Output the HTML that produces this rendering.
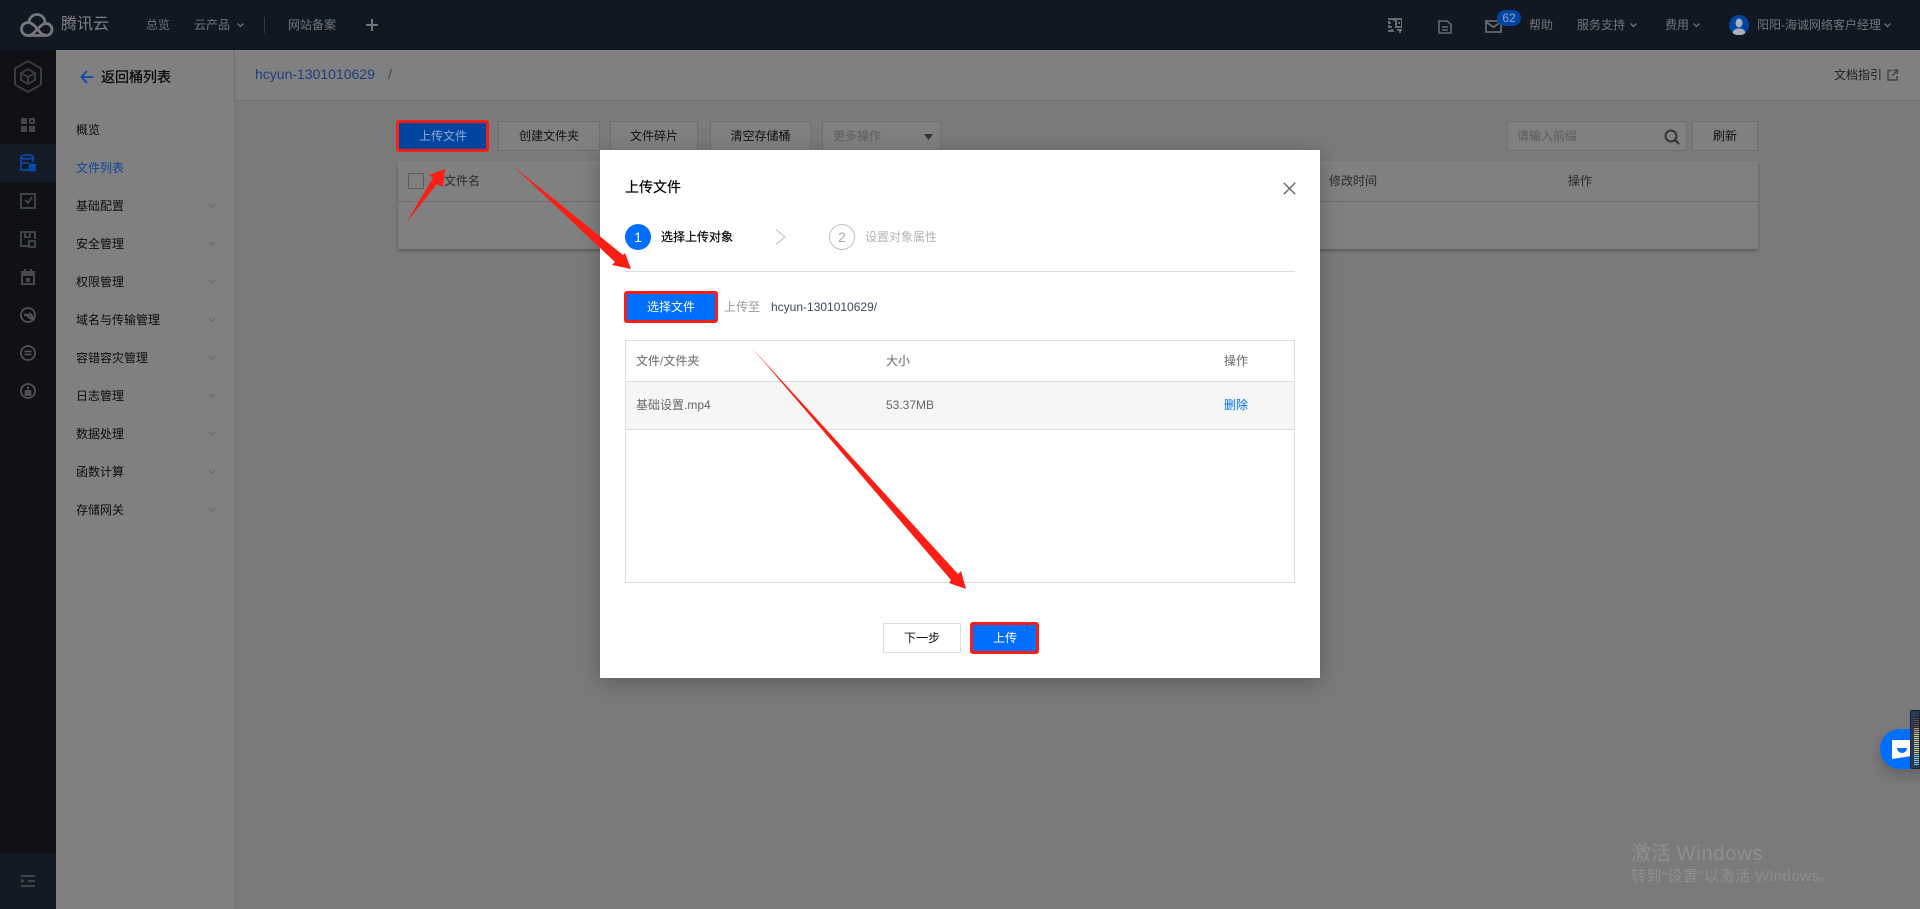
<!DOCTYPE html>
<html lang="zh-CN"><head><meta charset="utf-8"><title>上传文件</title>
<style>
html,body{margin:0;padding:0;width:1920px;height:909px;overflow:hidden;background:#7a7a7a;font-family:"Liberation Sans","Noto Sans CJK SC",sans-serif;font-size:12px}
div,span,svg{position:absolute;box-sizing:border-box}
.t{white-space:nowrap;line-height:20px;height:20px}
.b{border:1px solid #6f6f6f;background:#808080;text-align:center;line-height:28px;color:#111;white-space:nowrap}
.n{color:#72757a}.m{color:#0c0c0c;left:76px}
</style></head><body>
<!-- top bar -->
<div style="left:0;top:0;width:1920px;height:50px;background:#121822"></div>
<svg style="left:20px;top:13px" width="34" height="24" viewBox="0 0 34 24" fill="none" stroke="#74777b" stroke-width="2.800"><path d="M8 22.500h18a6 6 0 1 0 0-12c-3.500 0-6 3-8.500 5.500s-5 6.500-9.500 6.500a6.500 6.500 0 1 1 0-13c3.500 0 6 2.500 9 6s4.500 6.500 8.500 6.500"/><path d="M9 9.500A8 8 0 0 1 25 9.500"/></svg>
<span class="t" style="left:61px;top:15px;font-size:16px;color:#7e8185">腾讯云</span>
<span class="t n" style="left:146px;top:15px">总览</span>
<span class="t n" style="left:194px;top:15px">云产品</span>
<svg style="left:237px;top:23px" width="7" height="5" fill="none" stroke="#72757a" stroke-width="1.300"><path d="M.5 .5l3 3 3-3"/></svg>
<div style="left:264px;top:17px;width:1px;height:16px;background:#333840"></div>
<span class="t n" style="left:288px;top:15px">网站备案</span>
<svg style="left:366px;top:19px" width="12" height="12" fill="none" stroke="#72757a" stroke-width="2"><path d="M6 0v12M0 6h12"/></svg>
<svg style="left:1388px;top:18px" width="14" height="15" fill="none" stroke="#66696e" stroke-width="2"><path d="M0 1h5M6 0v3M0 5h3M0 9h4M0 13h6M8 1h6v8H8zM11 4v2M9 12h5M12 11v4M1 3v1M1 7v1M4 11v3"/></svg>
<svg style="left:1438px;top:20px" width="14" height="14" fill="none" stroke="#66696e" stroke-width="1.600"><path d="M1 1h8l4 3.500V13H1zM4 7h6M4 10h6"/></svg>
<svg style="left:1485px;top:20px" width="17" height="13" fill="none" stroke="#66696e" stroke-width="1.800"><path d="M1 1h15v11H1zM1 2l7.500 5L16 2"/></svg>
<div style="left:1497px;top:10px;width:24px;height:16px;border-radius:8px;background:#0045a0;color:#8fa5cc;text-align:center;line-height:16px;font-size:12px">62</div>
<span class="t n" style="left:1529px;top:15px">帮助</span>
<span class="t n" style="left:1577px;top:15px">服务支持</span>
<svg style="left:1630px;top:23px" width="7" height="5" fill="none" stroke="#72757a" stroke-width="1.300"><path d="M.5 .5l3 3 3-3"/></svg>
<span class="t n" style="left:1665px;top:15px">费用</span>
<svg style="left:1693px;top:23px" width="7" height="5" fill="none" stroke="#72757a" stroke-width="1.300"><path d="M.5 .5l3 3 3-3"/></svg>
<svg style="left:1729px;top:15px" width="20" height="20"><circle cx="10" cy="10" r="10" fill="#0045a0"/><ellipse cx="10" cy="8" rx="3.500" ry="4.500" fill="#a9b1bc"/><path d="M3.500 18c1-4 4-4.500 6.500-4.500s5.500.5 6.500 4.500a10 10 0 0 1-13 0z" fill="#a9b1bc"/></svg>
<span class="t n" style="left:1757px;top:15px">阳阳-海诚网络客户经理</span>
<svg style="left:1884px;top:23px" width="7" height="5" fill="none" stroke="#72757a" stroke-width="1.300"><path d="M.5 .5l3 3 3-3"/></svg>
<!-- left rail -->
<div style="left:0;top:50px;width:56px;height:859px;background:#0f1116"></div>
<div style="left:0;top:144px;width:56px;height:38px;background:#141b27"></div>
<div style="left:0;top:853px;width:56px;height:56px;background:#131a24"></div>
<svg style="left:14px;top:60px" width="28" height="33" fill="none" stroke="#3e4044" stroke-width="1.800"><path d="M14 1l13 7.500v16L14 32 1 24.500v-16z"/><path d="M14 9l7 4v7l-7 4-7-4v-7zM7 13l7 4 7-4M14 17v7"/></svg>
<svg style="left:21px;top:118px" width="14" height="14" fill="#434548"><path d="M0 0h6v6H0zM0 8h6v6H0zM8 8h6v6H8z"/><path fill-rule="evenodd" d="M8 0h6v6H8zM10 2v2h2V2z"/></svg>
<svg style="left:20px;top:154px" width="16" height="18" fill="none" stroke="#0a48a5" stroke-width="1.800"><path d="M9 16H1V3c0-3 12-3 12 0v5M1 3c0 2.500 12 2.500 12 0M1 9h8"/><path d="M9.500 10.500h5.500v6H9.500z" fill="#0a48a5"/></svg>
<svg style="left:20px;top:193px" width="16" height="16" fill="none" stroke="#46484c" stroke-width="1.800"><path d="M1 1h14v14H1zM5 7l3 3 4-6"/></svg>
<svg style="left:20px;top:231px" width="16" height="17" fill="none" stroke="#46484c" stroke-width="1.800"><path d="M9 15H1V1h14v7M5 2v4h5V2M9 10h6v6H9z"/></svg>
<svg style="left:21px;top:269px" width="14" height="16" fill="none" stroke="#46484c" stroke-width="2"><path d="M1 4h12v11H1zM4 0v3M10 0v3"/><path d="M1 3h12v3H1z" fill="#46484c"/><path d="M6 10h2v2H6z" fill="#46484c"/></svg>
<svg style="left:20px;top:307px" width="16" height="16" fill="none" stroke="#505256" stroke-width="1.800"><circle cx="8" cy="8" r="7"/><path d="M4 8h3l3 3 3 1-1-3-3-3" stroke-width="2.400"/></svg>
<svg style="left:20px;top:345px" width="16" height="16" fill="none" stroke="#505256" stroke-width="1.800"><circle cx="8" cy="8" r="7"/><path d="M4.500 6.500h7M4.500 9.500h7"/></svg>
<svg style="left:20px;top:383px" width="16" height="16" fill="none" stroke="#505256" stroke-width="1.800"><circle cx="8" cy="8" r="7"/><path d="M8 3.500v3M5.500 8h5v4h-5z" fill="#505256"/></svg>
<svg style="left:21px;top:875px" width="14" height="12" fill="#3f4449"><path d="M0 0h14v2H0zM7 5h7v2H7zM0 10h14v2H0zM0 3.500L4 6 0 8.500z"/></svg>
<!-- secondary nav -->
<div style="left:56px;top:50px;width:179px;height:859px;background:#808080;border-right:1px solid #6f6f6f"></div>
<svg style="left:80px;top:70px" width="14" height="14" fill="none" stroke="#0a48a5" stroke-width="1.800"><path d="M13.500 7H1.500M7 1L1.500 7 7 13"/></svg>
<span class="t" style="left:101px;top:67px;font-size:14px;color:#050505;-webkit-text-stroke:.2px #050505">返回桶列表</span>
<span class="t m" style="top:120px">概览</span>
<span class="t m" style="top:158px;color:#0d47a1">文件列表</span>
<span class="t m" style="top:196px">基础配置</span>
<span class="t m" style="top:234px">安全管理</span>
<span class="t m" style="top:272px">权限管理</span>
<span class="t m" style="top:310px">域名与传输管理</span>
<span class="t m" style="top:348px">容错容灾管理</span>
<span class="t m" style="top:386px">日志管理</span>
<span class="t m" style="top:424px">数据处理</span>
<span class="t m" style="top:462px">函数计算</span>
<span class="t m" style="top:500px">存储网关</span>
<svg style="left:0;top:0" width="235" height="540" fill="none" stroke="#6c6c6c" stroke-width="1.200"><path d="M209 204l3 3 3-3M209 242l3 3 3-3M209 280l3 3 3-3M209 318l3 3 3-3M209 356l3 3 3-3M209 394l3 3 3-3M209 432l3 3 3-3M209 470l3 3 3-3M209 508l3 3 3-3"/></svg>
<!-- breadcrumb -->
<div style="left:235px;top:50px;width:1685px;height:51px;background:#808080;border-bottom:1px solid #6f6f6f"></div>
<span class="t" style="left:255px;top:64px;font-size:14px;color:#1f3e80">hcyun-1301010629</span>
<span class="t" style="left:388px;top:64px;font-size:14px;color:#444">/</span>
<span class="t" style="left:1834px;top:65px;color:#222">文档指引</span>
<svg style="left:1887px;top:69px" width="11" height="12" fill="none" stroke="#444" stroke-width="1.500"><path d="M5 1.500H1v9.500h9V7M5.500 6.500L10 1.500M6.500 1h4v4"/></svg>
<!-- toolbar -->
<div style="left:399px;top:123px;width:88px;height:26px;background:#0045a0;color:#94a7ca;text-align:center;line-height:26px">上传文件</div>
<div class="b" style="left:498px;top:121px;width:102px;height:30px">创建文件夹</div>
<div class="b" style="left:610px;top:121px;width:88px;height:30px">文件碎片</div>
<div class="b" style="left:710px;top:121px;width:101px;height:30px">清空存储桶</div>
<div class="b" style="left:822px;top:121px;width:119px;height:30px;text-align:left;padding-left:10px;color:#5f5f5f">更多操作</div>
<svg style="left:924px;top:134px" width="9" height="6"><path d="M0 0h9L4.500 6z" fill="#333"/></svg>
<div class="b" style="left:1507px;top:121px;width:180px;height:30px;text-align:left;padding-left:9px;color:#5c5c5c">请输入前缀</div>
<svg style="left:1664px;top:129px" width="16" height="16" fill="none" stroke="#333" stroke-width="2"><circle cx="7" cy="7" r="5.500"/><path d="M11 11l4 4"/></svg>
<div class="b" style="left:1692px;top:121px;width:66px;height:30px">刷新</div>
<!-- table -->
<div style="left:398px;top:161px;width:1360px;height:88px;background:#808080;box-shadow:0 2px 3px rgba(0,0,0,.25)"></div>
<div style="left:398px;top:201px;width:1360px;height:1px;background:#6e6e6e"></div>
<div style="left:408px;top:173px;width:16px;height:16px;border:1px solid #5c5c5c"></div>
<span class="t" style="left:444px;top:171px;color:#3a3a3a;font-weight:500">文件名</span>
<span class="t" style="left:1329px;top:171px;color:#3a3a3a;font-weight:500">修改时间</span>
<span class="t" style="left:1568px;top:171px;color:#3a3a3a;font-weight:500">操作</span>
<!-- chat float -->
<div style="left:1880px;top:729px;width:60px;height:40px;border-radius:20px;background:#006eff;box-shadow:0 6px 12px rgba(0,0,0,.2)"></div>
<svg style="left:1892px;top:740px" width="20" height="19"><path d="M0 0h20v16L0 19z" fill="#fff"/><path d="M5 8h10a5 5 0 0 1-10 0z" fill="#006eff"/></svg>
<div style="left:1910px;top:710px;width:10px;height:59px;background:#28385a;border:1px solid #1c2434;border-radius:2px 0 0 2px"></div>
<div style="left:1914px;top:717px;width:5px;height:11px;background:repeating-linear-gradient(#222 0 1px,#555 1px 2px)"></div>
<div style="left:1914px;top:728px;width:5px;height:6px;background:repeating-linear-gradient(#c29a5f 0 1px,#38466a 1px 2px)"></div>
<div style="left:1914px;top:734px;width:5px;height:20px;background:repeating-linear-gradient(#cfc978 0 1px,#38466a 1px 2px)"></div>
<div style="left:1914px;top:754px;width:5px;height:11px;background:repeating-linear-gradient(#6fd0c8 0 1px,#38466a 1px 2px)"></div>
<!-- watermark -->
<span class="t" style="left:1631px;top:842px;height:24px;line-height:24px;font-size:20px;color:#8f8f8f">激活 <span style="position:static;letter-spacing:.8px">Windows</span></span>
<span class="t" style="left:1631px;top:867px;font-size:15px;letter-spacing:.5px;color:#8f8f8f">转到“设置”以激活 Windows。</span>
<!-- modal -->
<div style="left:600px;top:150px;width:720px;height:528px;background:#fff;box-shadow:0 4px 20px rgba(0,0,0,.25)"></div>
<span class="t" style="left:625px;top:177px;font-size:14px;color:#000;-webkit-text-stroke:.2px #000">上传文件</span>
<svg style="left:1283px;top:182px" width="13" height="13" fill="none" stroke="#777" stroke-width="1.600"><path d="M.8 .8l11.400 11.400M12.200 .8L.8 12.200"/></svg>
<div style="left:625px;top:224px;width:26px;height:26px;border-radius:50%;background:#006eff;color:#fff;text-align:center;line-height:26px;font-size:14px">1</div>
<span class="t" style="left:661px;top:227px;color:#000;-webkit-text-stroke:.2px #000">选择上传对象</span>
<svg style="left:775px;top:229px" width="11" height="16" fill="none" stroke="#c9c9c9" stroke-width="1.200"><path d="M1 .5l9 7.500-9 7.500"/></svg>
<div style="left:829px;top:224px;width:26px;height:26px;border-radius:50%;border:1px solid #c0c0c0;color:#aaa;text-align:center;line-height:24px;font-size:14px">2</div>
<span class="t" style="left:865px;top:227px;color:#b4b4b4">设置对象属性</span>
<div style="left:625px;top:271px;width:670px;height:1px;background:#ddd"></div>
<div style="left:627px;top:294px;width:88px;height:26px;background:#006eff;color:#fff;text-align:center;line-height:26px">选择文件</div>
<span class="t" style="left:724px;top:297px;color:#999">上传至</span>
<span class="t" style="left:771px;top:297px;color:#3a4a63">hcyun-1301010629/</span>
<div style="left:625px;top:340px;width:670px;height:243px;border:1px solid #ddd"></div>
<div style="left:626px;top:381px;width:668px;height:49px;background:#f6f6f6;border-top:1px solid #ddd;border-bottom:1px solid #ddd"></div>
<span class="t" style="left:636px;top:351px;color:#808080;font-weight:500">文件/文件夹</span>
<span class="t" style="left:886px;top:351px;color:#808080;font-weight:500">大小</span>
<span class="t" style="left:1224px;top:351px;color:#808080;font-weight:500">操作</span>
<span class="t" style="left:636px;top:395px;color:#666">基础设置.mp4</span>
<span class="t" style="left:886px;top:395px;color:#666">53.37MB</span>
<span class="t" style="left:1224px;top:395px;color:#006eff">删除</span>
<div style="left:883px;top:623px;width:78px;height:30px;border:1px solid #ddd;background:#fff;color:#111;text-align:center;line-height:28px">下一步</div>
<div style="left:972px;top:624px;width:66px;height:28px;background:#006eff;color:#fff;text-align:center;line-height:28px">上传</div>
<!-- annotations -->
<div style="left:396px;top:120px;width:93px;height:32px;border:3px solid #fa1e14;border-radius:3px"></div>
<div style="left:624px;top:291px;width:94px;height:32px;border:3px solid #fa1e14;border-radius:3px"></div>
<div style="left:970px;top:622px;width:69px;height:32px;border:3px solid #fa1e14;border-radius:3px"></div>
<svg style="left:0;top:0" width="1920" height="909"><g fill="#fa1e14"><path d="M406 223L433 178 429 175 445 169 443 187 437 184z"/><path d="M513 166L623 255 625 253 631 269 612 265 615 262z"/><path d="M752 348L958 574 961 571 966 589 949 583 951 580z"/></g></svg>
</body></html>
